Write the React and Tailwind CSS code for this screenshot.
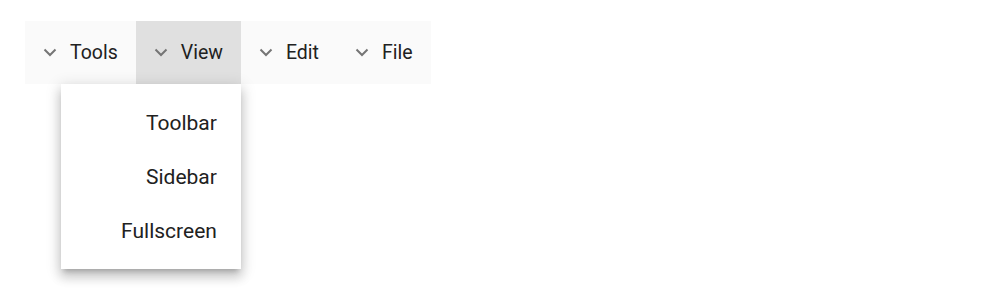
import React from "react";

const menus = ["Tools", "View", "Edit", "File"];
const viewItems = ["Toolbar", "Sidebar", "Fullscreen"];

const Chevron = () => (
  <svg width="14" height="9" viewBox="0 0 14 9" className="shrink-0">
    <path d="M1.5 1.5 L7 7 L12.5 1.5" fill="none" stroke="#757575" strokeWidth="2" />
  </svg>
);

export default function App() {
  return (
    <div className="min-h-[301px] w-full bg-white pl-[25px] pt-[21px] font-['Roboto',sans-serif] text-[#212121]">
      <div className="inline-flex bg-[#fafafa] text-[19.5px]">
        {menus.map((m) => (
          <div
            key={m}
            className={
              "relative flex h-[63px] items-center gap-[13px] px-[18px] " +
              (m === "View" ? "bg-[#e0e0e0]" : "")
            }
          >
            <Chevron />
            <span>{m}</span>
            {m === "View" && (
              <div className="absolute right-0 top-full z-10 w-[180px] bg-white pt-[13px] pb-[10px] text-[21px] shadow-[0_8px_10px_1px_rgba(0,0,0,0.14),0_3px_14px_2px_rgba(0,0,0,0.12),0_5px_5px_-3px_rgba(0,0,0,0.2)]">
                {viewItems.map((it) => (
                  <div key={it} className="flex h-[54px] items-center justify-end pr-6">
                    {it}
                  </div>
                ))}
              </div>
            )}
          </div>
        ))}
      </div>
    </div>
  );
}
